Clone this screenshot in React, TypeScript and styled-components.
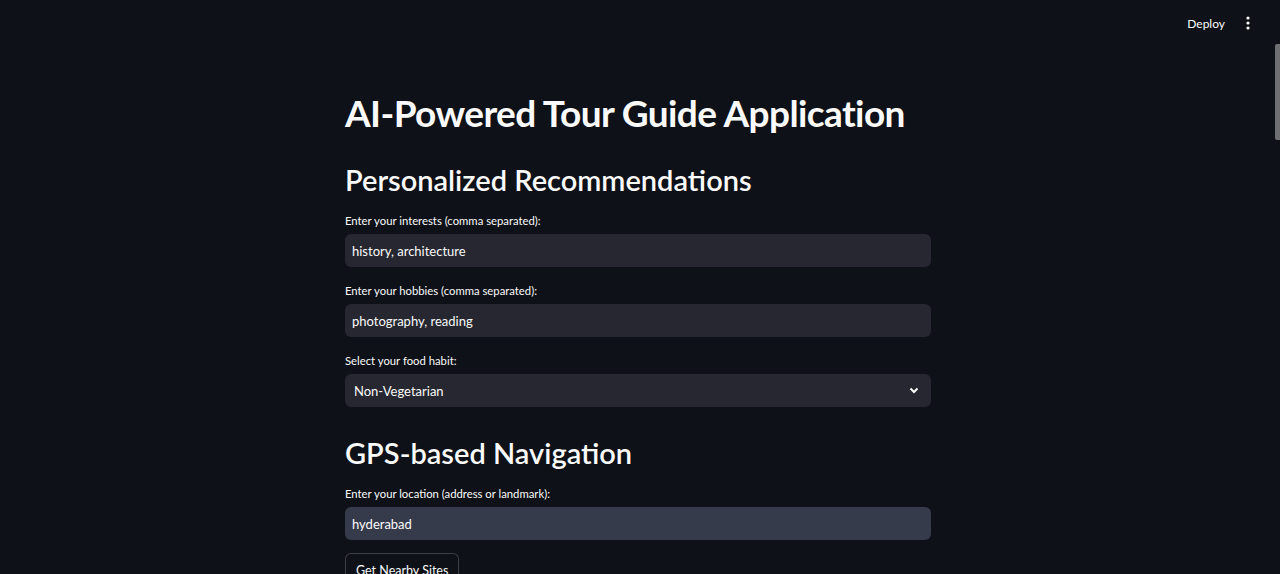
import React from "react";
import styled, { createGlobalStyle } from "styled-components";

const Global = createGlobalStyle`
  html, body { margin: 0; padding: 0; background: #0e1117; }
  body { font-family: Lato, "Open Sans", sans-serif; color: #fafafa; }
  * { box-sizing: border-box; }
`;

const Shell = styled.div`
  position: relative;
  width: 1280px;
  height: 574px;
  overflow: hidden;
  background: #0e1117;
  display: flex;
  flex-direction: column;
`;

const Header = styled.header`
  height: 46px;
  flex: none;
  display: flex;
  align-items: center;
  justify-content: flex-end;
  gap: 7px;
  padding-right: 22px;
`;

const DeployButton = styled.span`
  font-size: 12px;
  color: #fafafa;
  padding: 4px 6px;
`;

const Kebab = styled.span`
  display: flex;
  align-items: center;
  width: 20px;
  justify-content: center;
`;

const ScrollThumb = styled.div`
  position: absolute;
  right: 0;
  top: 44px;
  width: 5px;
  height: 96px;
  background: #6e6f72;
  border-radius: 2px 0 0 2px;
`;

const Main = styled.main`
  flex: 1;
  display: flex;
  justify-content: center;
  padding-right: 4px;
`;

const Block = styled.div`
  width: 586px;
  display: flex;
  flex-direction: column;
  padding-top: 44px;
`;

const Title = styled.h1`
  margin: 0;
  font-size: 37px;
  line-height: 46px;
  font-weight: 700;
  letter-spacing: -0.6px;
`;

const SubTitle = styled.h2<{ $gap: number }>`
  margin: ${(p) => p.$gap}px 0 0;
  font-size: 29px;
  line-height: 36px;
  font-weight: 600;
`;

const Field = styled.div<{ $gap: number }>`
  margin-top: ${(p) => p.$gap}px;
  display: flex;
  flex-direction: column;
  gap: 5px;
`;

const Label = styled.label`
  font-size: 11.3px;
  line-height: 16px;
  color: #fafafa;
`;

const InputBox = styled.div<{ $active?: boolean }>`
  height: 33px;
  border-radius: 6px;
  background: ${(p) => (p.$active ? "#363b4c" : "#262730")};
  display: flex;
  align-items: center;
  padding: 0 7px;
  font-size: 13px;
  color: #fafafa;
`;

const SelectBox = styled(InputBox)`
  justify-content: space-between;
  padding: 0 12px 0 9px;
`;

const Button = styled.button`
  margin-top: 13px;
  align-self: flex-start;
  height: 36px;
  padding: 9px 10px 0;
  background: #0e1117;
  border: 1px solid rgba(250, 250, 250, 0.2);
  border-radius: 6px;
  color: #fafafa;
  font-family: inherit;
  font-size: 12.5px;
  display: flex;
  align-items: flex-start;
`;

export default function App() {
  return (
    <Shell>
      <Global />
      <Header>
        <DeployButton>Deploy</DeployButton>
        <Kebab>
          <svg width="4" height="14" viewBox="0 0 4 14">
            <circle cx="2" cy="2" r="1.6" fill="#fafafa" />
            <circle cx="2" cy="7" r="1.6" fill="#fafafa" />
            <circle cx="2" cy="12" r="1.6" fill="#fafafa" />
          </svg>
        </Kebab>
      </Header>
      <Main>
        <Block>
          <Title>AI-Powered Tour Guide Application</Title>
          <SubTitle $gap={26}>Personalized Recommendations</SubTitle>
          <Field $gap={15}>
            <Label>Enter your interests (comma separated):</Label>
            <InputBox>history, architecture</InputBox>
          </Field>
          <Field $gap={16}>
            <Label>Enter your hobbies (comma separated):</Label>
            <InputBox>photography, reading</InputBox>
          </Field>
          <Field $gap={16}>
            <Label>Select your food habit:</Label>
            <SelectBox>
              <span>Non-Vegetarian</span>
              <svg width="10" height="7" viewBox="0 0 10 7">
                <path d="M1.5 1.5 L5 5 L8.5 1.5" stroke="#fafafa" strokeWidth="2" fill="none" />
              </svg>
            </SelectBox>
          </Field>
          <SubTitle $gap={28}>GPS-based Navigation</SubTitle>
          <Field $gap={15}>
            <Label>Enter your location (address or landmark):</Label>
            <InputBox $active>hyderabad</InputBox>
          </Field>
          <Button>Get Nearby Sites</Button>
        </Block>
      </Main>
      <ScrollThumb />
    </Shell>
  );
}
